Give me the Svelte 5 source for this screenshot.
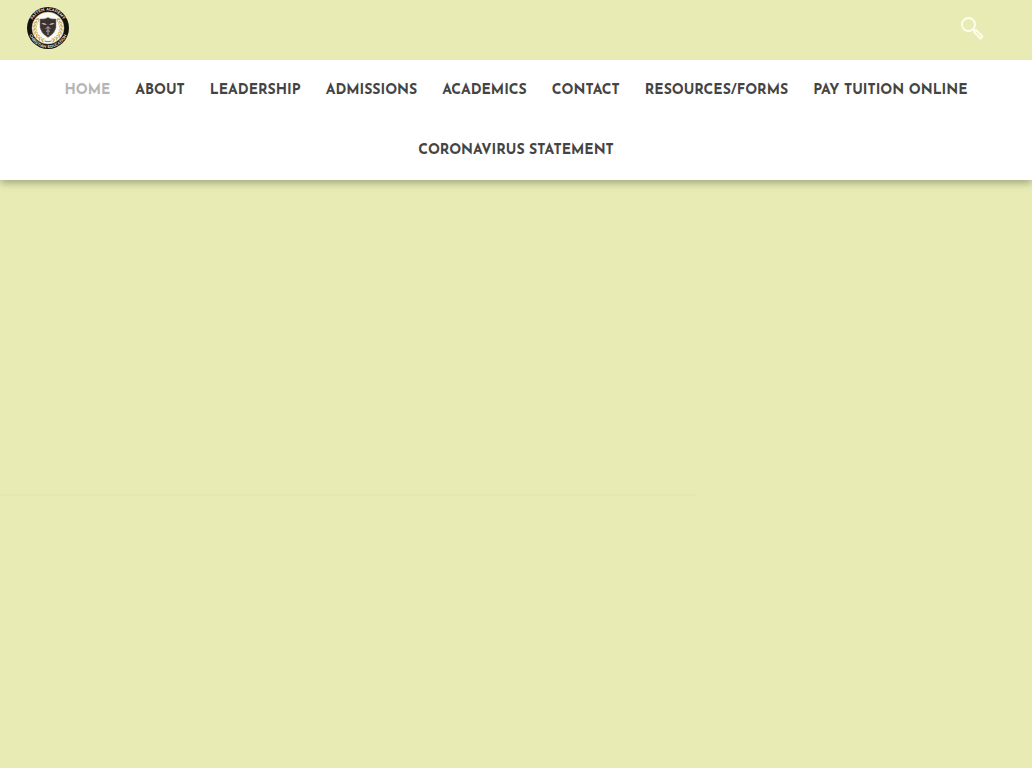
<script lang="ts">
	interface NavItem {
		label: string;
		href: string;
	}

	const items: NavItem[] = [
		{ label: 'Home', href: '#home' },
		{ label: 'About', href: '#about' },
		{ label: 'Leadership', href: '#leadership' },
		{ label: 'Admissions', href: '#admissions' },
		{ label: 'Academics', href: '#academics' },
		{ label: 'Contact', href: '#contact' },
		{ label: 'Resources/Forms', href: '#resources' },
		{ label: 'Pay Tuition Online', href: '#tuition' },
		{ label: 'Coronavirus Statement', href: '#coronavirus' }
	];

	let current = $state('#home');

	// laurel leaves on the left branch; the right branch is mirrored
	const leaves = [217, 202, 187, 172, 157, 142, 127, 112];
</script>

<header class="site-header">
	<div class="top-bar">
		<a class="logo" href="#home" aria-label="Academy home">
			<svg viewBox="0 0 84 84" aria-hidden="true">
				<defs>
					<path id="arc-top" d="M7 42A35 35 0 0 1 77 42" />
					<path id="arc-bottom" d="M2 42A40 40 0 0 0 82 42" />
				</defs>
				<circle cx="42" cy="42" r="42" fill="#14120e" />
				<circle cx="42" cy="42" r="32" fill="#fbfaf3" stroke="#b9a878" stroke-width="1" />
				<text class="seal"><textPath href="#arc-top" startOffset="50%">PATTEN ACADEMY</textPath></text>
				<text class="seal"><textPath href="#arc-bottom" startOffset="50%">CHRISTIAN EDUCATION</textPath></text>
				{#each [1, -1] as side}
					<g transform="translate(42 42) scale({side} 1)">
						{#each leaves as angle}
							<g transform="rotate({angle}) translate(26 0)">
								<ellipse cx="-2" rx="1.5" ry="4" transform="rotate(-30)" fill="#dcc27a" />
								<ellipse cx="2" rx="1.5" ry="4" transform="rotate(30)" fill="#c9a95a" />
							</g>
						{/each}
					</g>
				{/each}
				<path
					d="M42 21Q49 25 58 24V41Q56 53 42 61Q28 53 26 41V24Q35 25 42 21Z"
					fill="#3a3230"
					stroke="#8b8580"
					stroke-width="1"
				/>
				<path d="M29 33Q34 30 40 35Q34 37 29 33ZM55 33Q50 30 44 35Q50 37 55 33Z" fill="#d3c4ad" />
				<path d="M42 38V56M37 43Q42 39 47 43M38 49Q42 45 46 49" fill="none" stroke="#aaa6a1" stroke-width="2" />
				<path d="M35 68Q42 71 49 68" fill="none" stroke="#8b7750" stroke-width="2" />
			</svg>
		</a>
		<button class="search" type="button" aria-label="Search">
			<svg viewBox="0 0 24 24" aria-hidden="true">
				<circle cx="8.5" cy="8.5" r="6.5" />
				<path d="M13 13l2 2M16 14l6.500 6.500-2 2L14 16z" />
			</svg>
		</button>
	</div>

	<nav class="main-nav" aria-label="Main">
		<ul>
			{#each items as item}
				<li>
					<a
						href={item.href}
						class:active={current === item.href}
						aria-current={current === item.href ? 'page' : undefined}
						onclick={() => (current = item.href)}>{item.label}</a
					>
				</li>
			{/each}
		</ul>
	</nav>
</header>

<main>
	<section class="banner"></section>
</main>

<style>
	:global(body) {
		margin: 0;
		background: #e8ecb4;
	}

	.site-header {
		position: relative;
		font-family: 'Josefin Sans', Lato, sans-serif;
		box-shadow: 0 3px 8px rgba(0, 0, 0, 0.3);
	}

	.top-bar {
		display: flex;
		align-items: center;
		justify-content: space-between;
		height: 60px;
		padding: 0 48px 0 27px;
		box-sizing: border-box;
		background: #e8ecb4;
	}

	.logo,
	.logo svg {
		display: block;
		width: 42px;
		height: 42px;
	}

	.logo {
		margin-bottom: 4px;
	}

	.seal {
		fill: #e0ddd3;
		font-size: 8px;
		font-weight: 700;
		text-anchor: middle;
	}

	.search {
		padding: 0;
		margin-bottom: 4px;
		border: 0;
		background: none;
		cursor: pointer;
	}

	.search svg {
		display: block;
		width: 24px;
		height: 24px;
		fill: none;
		stroke: #fdfef0;
		stroke-width: 1.8;
		stroke-linejoin: round;
	}

	.main-nav {
		padding: 0 48px;
		background: #fff;
	}

	.main-nav ul {
		display: flex;
		flex-wrap: wrap;
		justify-content: center;
		column-gap: 25px;
		margin: 0;
		padding: 0;
		list-style: none;
	}

	.main-nav a {
		display: block;
		padding-top: 2px;
		color: #444;
		font-size: 14px;
		font-weight: 700;
		line-height: 58px;
		text-decoration: none;
		text-transform: uppercase;
		white-space: nowrap;
	}

	.main-nav a:hover,
	.main-nav a.active {
		color: #b5b5b5;
	}

	.banner {
		width: 67.3%;
		min-height: 314px;
		border-bottom: 2px solid #e4e7b0;
	}
</style>
